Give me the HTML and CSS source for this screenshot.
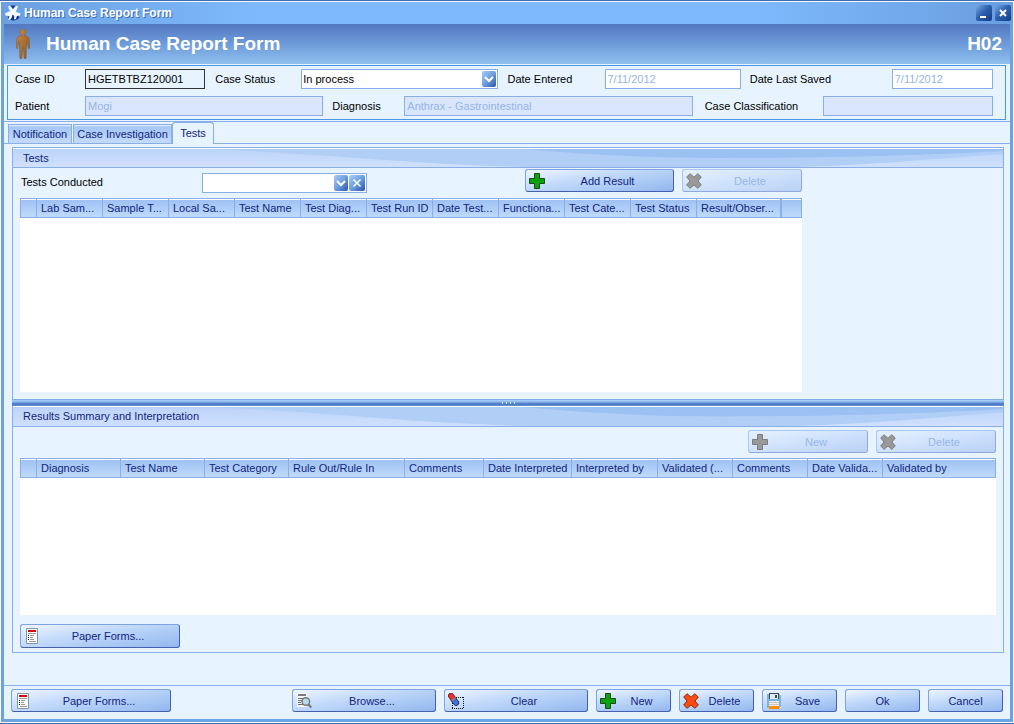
FILE: index.html
```html
<!DOCTYPE html>
<html lang="en">
<head>
<meta charset="utf-8">
<title>Human Case Report Form</title>
<meta name="viewport" content="width=device-width, initial-scale=1">
<link rel="stylesheet" href="styles.css">
</head>
<body>
<svg class="defs" aria-hidden="true">
  <defs>
    <linearGradient id="arrow-bg" x1="0" y1="0" x2="1" y2="1">
      <stop offset="0" stop-color="#a9cdf8"/><stop offset=".5" stop-color="#6c9fe0"/><stop offset="1" stop-color="#2c54a6"/>
    </linearGradient>
    <linearGradient id="skin" x1="0" y1="0" x2="1" y2="1">
      <stop offset="0" stop-color="#c98a45"/><stop offset="1" stop-color="#8f5420"/>
    </linearGradient>
    <symbol id="i-plus" viewBox="0 0 16 16">
      <path d="M5.5.5h5v5h5v5h-5v5h-5v-5h-5v-5h5z" fill="currentColor" stroke="var(--edge)"/>
    </symbol>
    <symbol id="i-cross" viewBox="0 0 16 16">
      <path d="M4 .7 8 4.200 11.800.7 15.300 4 12 8l3.300 4-3.500 3.300L8 12l-4 3.300L.7 12 4 8 .7 4z" fill="currentColor" stroke="var(--edge)" stroke-linejoin="round"/>
    </symbol>
    <symbol id="i-paper" viewBox="0 0 16 16">
      <path d="M2.500.5h11v15h-11z" fill="#fff" stroke="#7f98a8"/>
      <path d="M4 2h8v2H4z" fill="#d20a0a"/>
      <path d="M4 5.500h8M6 7.500h4M6 9.500h3M6 11.500h4M5 13.500h7" stroke="#9a9a9a"/>
      <path d="M4 7h1v1H4zM4 9h1v1H4zM4 11h1v1H4z" fill="#111"/>
    </symbol>
    <symbol id="i-browse" viewBox="0 0 16 16">
      <path d="M1 0h10v14H1z" fill="#f4f7fb"/>
      <path d="M2 2h8" stroke="#7d7d7d" stroke-width="2"/>
      <path d="M2 5.500h7M2 7.500h4M2 9.500h3M2 11.500h5" stroke="#6f6f6f"/>
      <path d="m12.500 11.500 2.800 3" stroke="#777" stroke-width="2.200"/>
      <circle cx="9.800" cy="8.500" r="3.800" fill="#b9d9ef" stroke="#777" stroke-width="1.400"/>
    </symbol>
    <symbol id="i-clear" viewBox="0 0 16 16">
      <path d="M4 4.500h12M4 15.500h12M4.500 4v12M15.500 4v12" fill="none" stroke="#111" stroke-dasharray="1 1" shape-rendering="crispEdges"/>
      <path d="m3 2.800 2.800 3.700" stroke="#5a2020" stroke-width="6" stroke-linecap="round"/>
      <path d="m5.500 6.500 2.700 3.200" stroke="#2b3547" stroke-width="6" stroke-linecap="round"/>
      <path d="m3.100 2.900 2.200 2.900" stroke="#ee2f2f" stroke-width="4.600" stroke-linecap="round"/>
      <path d="m6.600 8 1.500 1.600" stroke="#3b72e0" stroke-width="4.600" stroke-linecap="round"/>
      <path d="m3.500 8 4.200-3.600" stroke="#8d8d8d" stroke-width="1.200"/>
    </symbol>
    <symbol id="i-save" viewBox="0 0 16 16">
      <path d="M1 1h14v14H1z" fill="#79b4dc"/>
      <path d="M3 0h10v6H3z" fill="#2f4b5c"/><path d="M4 1h8v5H4z" fill="#e6e9ea"/><path d="M9 2h2v3H9z" fill="#33505f"/>
      <path d="M3 8h10v5H3z" fill="#f0eeea"/><path d="M3 9.500h10M3 11.500h10" stroke="#c8c5c0"/>
      <path d="M3 13h10v3H3z" fill="#ff8a00"/><path d="M14 1h1v1h-1zM14 14h1v1h-1z" fill="#fff"/>
    </symbol>
    <symbol id="i-arrow" viewBox="0 0 14 16">
      <rect width="14" height="16" rx="2" fill="url(#arrow-bg)"/>
      <path d="m3 6 4 4 4-4" fill="none" stroke="#fff" stroke-width="2"/>
    </symbol>
    <symbol id="i-clearbox" viewBox="0 0 16 16">
      <rect width="16" height="16" rx="2" fill="url(#arrow-bg)"/>
      <path d="m4.500 4.500 7 7m0-7-7 7" fill="none" stroke="#fff" stroke-width="1.600"/>
    </symbol>
    <symbol id="swoosh" viewBox="0 0 990 18" preserveAspectRatio="none">
      <path d="M190 0C310 4 400 16 520 18H780C860 16 930 9 990 5V0z" fill="#b0cef6"/>
      <path d="M510 0C580 6 640 9 710 9 820 9 920 6 990 2V0z" fill="#9bc0f2"/>
    </symbol>
  </defs>
</svg>

<div class="window">
  <header class="titlebar">
    <svg class="app-icon" viewBox="0 0 16 16" aria-hidden="true">
      <circle cx="8.500" cy="8.500" r="7" fill="#6aa8f4"/>
      <path d="M2.500 12a7 7 0 0 0 12 0L9 9z" fill="#0b2f96"/>
      <path d="M5.500.5h5L8 4z" fill="#123a9c"/>
      <path d="m3.500.8 1.800.2L8 4.800l3-4 2 .7-2.200 5 1.700 1.300 3 .7-.5 2-3 .3-1 3.200-2 .5.3-3.500L7.500 9.500 7 12l-1.500 2.500-2.200.2L4.500 11 .5 10.500 0 8.500l4-2 2 .2-2.300-3.200z" fill="#fff"/>
    </svg>
    <span class="window-title">Human Case Report Form</span>
    <button class="caption" type="button" aria-label="Minimize"><svg viewBox="0 0 16 16"><path d="M4 11h6v2H4z" fill="#fff"/></svg></button>
    <button class="caption" type="button" aria-label="Close"><svg viewBox="0 0 16 16"><path d="m5 5 6 6m0-6-6 6" stroke="#fff" stroke-width="2"/></svg></button>
  </header>

  <div class="banner">
    <svg class="person" viewBox="0 0 14 30" aria-hidden="true">
      <path d="M7 0a3 3 0 0 1 1.500 5.700V7h2.800L13 9l1 10-1.500.5L11 12l-.5 3-.3 14.500H8L7.300 18h-.6L6 29.500H3.800L3.500 15 3 12l-1.500 7.500L0 19 1 9l1.700-2h2.800V5.700A3 3 0 0 1 7 0z" fill="url(#skin)" stroke="#7d5a3c" stroke-width=".5"/>
    </svg>
    <h1>Human Case Report Form</h1>
    <span class="form-code">H02</span>
  </div>

  <form class="case">
    <div class="case-row">
      <label class="first" for="case-id">Case ID</label>
      <input class="w-id framed" id="case-id" value="HGETBTBZ120001" readonly>
      <label class="l-status" for="status">Case Status</label>
      <div class="select w-status">
        <select id="status"><option>In process</option></select>
        <svg class="drop" aria-hidden="true"><use href="#i-arrow"/></svg>
      </div>
      <label class="l-entered" for="entered">Date Entered</label>
      <input class="w-entered" id="entered" value="7/11/2012" disabled>
      <label class="l-saved" for="saved">Date Last Saved</label>
      <input class="w-saved" id="saved" value="7/11/2012" disabled>
    </div>
    <div class="case-row">
      <label class="first" for="patient">Patient</label>
      <input class="w-patient tinted" id="patient" value="Mogi" disabled>
      <label class="l-diagnosis" for="diagnosis">Diagnosis</label>
      <input class="w-diagnosis tinted" id="diagnosis" value="Anthrax - Gastrointestinal" disabled>
      <label class="l-class" for="classification">Case Classification</label>
      <input class="w-class tinted" id="classification" value="" disabled>
    </div>
  </form>

  <div class="tabs" role="tablist">
    <button class="tab t-notification" type="button" role="tab">Notification</button>
    <button class="tab t-investigation" type="button" role="tab">Case Investigation</button>
    <button class="tab t-tests active" type="button" role="tab" aria-selected="true">Tests</button>
  </div>

  <main class="content">
    <section class="panel tests">
      <h2><svg class="swoosh" aria-hidden="true"><use href="#swoosh"/></svg><span>Tests</span></h2>
      <div class="panel-body">
        <div class="toolbar">
          <label class="conducted" for="conducted">Tests Conducted</label>
          <div class="select w-conducted">
            <select id="conducted"><option></option></select>
            <svg class="drop" aria-hidden="true"><use href="#i-arrow"/></svg>
            <button class="reset" type="button" aria-label="Clear selection"><svg aria-hidden="true"><use href="#i-clearbox"/></svg></button>
          </div>
          <div class="actions">
            <button class="btn b-add" type="button"><svg class="green"><use href="#i-plus"/></svg><span>Add Result</span></button>
            <button class="btn b-mid" type="button" disabled><svg class="gray"><use href="#i-cross"/></svg><span>Delete</span></button>
          </div>
        </div>
        <div class="grid grid-tests">
          <table>
            <colgroup><col class="c16"><col span="10" class="c66"><col class="c84"><col class="c22"></colgroup>
            <thead><tr><th></th><th>Lab Sam...</th><th>Sample T...</th><th>Local Sa...</th><th>Test Name</th><th>Test Diag...</th><th>Test Run ID</th><th>Date Test...</th><th>Functiona...</th><th>Test Cate...</th><th>Test Status</th><th>Result/Obser...</th><th class="fixed"></th></tr></thead>
          </table>
        </div>
      </div>
    </section>

    <div class="splitter"><i></i><i></i><i></i><i></i></div>

    <section class="panel results">
      <h2><svg class="swoosh" aria-hidden="true"><use href="#swoosh"/></svg><span>Results Summary and Interpretation</span></h2>
      <div class="panel-body">
        <div class="toolbar low">
          <div class="actions">
            <button class="btn b-mid" type="button" disabled><svg class="gray"><use href="#i-plus"/></svg><span>New</span></button>
            <button class="btn b-mid" type="button" disabled><svg class="gray"><use href="#i-cross"/></svg><span>Delete</span></button>
          </div>
        </div>
        <div class="grid grid-results">
          <table>
            <colgroup><col class="c16"><col span="3" class="c84"><col class="c116"><col class="c79"><col class="c88"><col class="c86"><col span="3" class="c75"><col class="c114"></colgroup>
            <thead><tr><th></th><th>Diagnosis</th><th>Test Name</th><th>Test Category</th><th>Rule Out/Rule In</th><th>Comments</th><th>Date Interpreted</th><th>Interpreted by</th><th>Validated (...</th><th>Comments</th><th>Date Valida...</th><th>Validated by</th></tr></thead>
          </table>
        </div>
        <button class="btn b-paper tall" type="button"><svg><use href="#i-paper"/></svg><span>Paper Forms...</span></button>
      </div>
    </section>
  </main>

  <footer class="footer">
    <button class="btn b-paper" type="button"><svg><use href="#i-paper"/></svg><span>Paper Forms...</span></button>
    <div class="actions">
      <button class="btn b-wide" type="button"><svg><use href="#i-browse"/></svg><span>Browse...</span></button>
      <button class="btn b-wide" type="button"><svg><use href="#i-clear"/></svg><span>Clear</span></button>
      <button class="btn b-small" type="button"><svg class="green"><use href="#i-plus"/></svg><span>New</span></button>
      <button class="btn b-small" type="button"><svg class="red"><use href="#i-cross"/></svg><span>Delete</span></button>
      <button class="btn b-small" type="button"><svg><use href="#i-save"/></svg><span>Save</span></button>
      <button class="btn b-small" type="button"><span>Ok</span></button>
      <button class="btn b-small" type="button"><span>Cancel</span></button>
    </div>
  </footer>
</div>
</body>
</html>
```

FILE: styles.css
```css
:root {
  --line: #89aee8;
  --ink: #10257f;
  --pale: #e7f3fe;
}
* { box-sizing: border-box; }
body {
  margin: 0;
  background: #fff;
  color: #000;
  font: 11px/14px "Liberation Sans", Arial, sans-serif;
}
button, input, select { font: inherit; color: inherit; margin: 0; }
svg { display: block; flex: none; }
.defs { position: absolute; width: 0; height: 0; }

.window {
  display: flex;
  flex-direction: column;
  min-height: 100vh;
  padding: 1px;
  border-top: 1px solid #4668b4;
  border-bottom: 1px solid #4668b4;
}
.titlebar {
  display: flex;
  align-items: center;
  gap: 3px;
  height: 22px;
  padding: 0 2px 0 4px;
  background: linear-gradient(90deg, #6ba0e0, #7db9fc 25%, #7db9fc 75%, #699ee0);
}
.app-icon { width: 16px; height: 16px; }
.window-title {
  flex: 1;
  color: #fff;
  font-size: 12px;
  font-weight: bold;
  text-shadow: 1px 1px 0 #3d6cb4;
}
.caption {
  width: 16px;
  height: 16px;
  padding: 0;
  border: 0;
  border-radius: 2px;
  background: linear-gradient(135deg, #7fa9e2, #2d62b0 45%, #123c86);
}
.caption svg { width: 16px; height: 16px; }

.banner, .case, .tabs, .content, .footer {
  border-left: 3px solid #6ba3e2;
  border-right: 3px solid #6ba3e2;
}
.banner {
  display: flex;
  align-items: center;
  height: 40px;
  padding: 0 8px 0 12px;
  background: linear-gradient(#5379c1, #6d9bd9 50%, #90c0f0);
  color: #fff;
}
.person { width: 14px; height: 30px; }
h1, .form-code { margin: 0; font-size: 19px; line-height: 24px; font-weight: bold; }
h1 { flex: 1; padding-left: 16px; }

.case { padding: 1px 4px 1px 3px; background: var(--pale); }
.case-row {
  display: flex;
  align-items: center;
  padding: 3px 12px 4px 7px;
  border: 1px solid #4a97e6;
  border-bottom: 0;
}
.case-row + .case-row { padding: 3px 12px 3px 7px; border-top: 0; border-bottom: 1px solid #4a97e6; }
.first { flex: none; width: 70px; }
.l-status { flex: none; width: 96px; padding-left: 10px; }
.l-entered { flex: none; width: 107px; padding-left: 10px; }
.l-saved { flex: none; width: 151px; padding-left: 9px; }
.l-diagnosis { flex: none; width: 81px; padding-left: 9px; }
.l-class { flex: none; width: 130px; padding-left: 12px; }
.w-id { flex: 1 1 120px; }
.w-status { flex: 1 1 196px; }
.w-entered { flex: 1 1 136px; }
.w-saved { flex: 1 1 101px; }
.w-patient { flex: 1 1 238px; }
.w-diagnosis { flex: 1 1 288px; }
.w-class { flex: 1 1 170px; }
input {
  min-width: 0;
  height: 20px;
  padding: 0 2px;
  border: 1px solid var(--line);
  border-radius: 0;
  background: #fff;
}
input:disabled { color: #95b5e6; }
input.tinted { background: #dae6fe; }
input.framed { border-color: #333; background: var(--pale); }

.select {
  position: relative;
  display: flex;
  align-items: center;
  height: 20px;
  min-width: 0;
  padding-right: 1px;
  border: 1px solid var(--line);
  background: #fff;
}
.select select {
  appearance: none;
  flex: 1;
  min-width: 0;
  height: 18px;
  padding: 0 1px;
  border: 0;
  background: transparent;
}
.drop { width: 14px; height: 16px; pointer-events: none; }
.reset { width: 16px; height: 16px; margin-left: 1px; padding: 0; border: 0; background: none; }
.reset svg { width: 16px; height: 16px; }

.tabs {
  display: flex;
  align-items: flex-end;
  height: 23px;
  padding: 0 4px;
  background: var(--pale);
  box-shadow: inset 0 1px 0 var(--line), inset 0 -1px 0 var(--line);
}
.tab {
  height: 20px;
  padding: 0;
  border: 1px solid var(--line);
  background: linear-gradient(#e9f2fe, #a5c7f5 2px, #c3dbfb);
  color: var(--ink);
  white-space: nowrap;
}
.tab.active {
  height: 22px;
  padding-bottom: 2px;
  border-bottom: 0;
  border-radius: 3px 3px 0 0;
  background: var(--pale);
}
.t-notification { width: 64px; margin-right: 1px; }
.t-investigation { width: 99px; }
.t-tests { width: 42px; }

.content {
  display: flex;
  flex: 1;
  flex-direction: column;
  padding: 3px 6px 32px 8px;
  background: var(--pale);
}
.panel {
  display: flex;
  flex-direction: column;
  border: 1px solid var(--line);
}
.tests { flex: 1 1 252px; border-bottom: 0; }
.results { flex: 1 1 247px; border-top: 0; }
h2 {
  position: relative;
  height: 20px;
  margin: 0;
  padding: 2px 10px 0;
  border-top: 1px solid #fff;
  border-bottom: 1px solid var(--line);
  background: linear-gradient(#bcd4fa, #d0e0fc);
  color: var(--ink);
  font-size: 11px;
  line-height: 14px;
  font-weight: normal;
}
.results h2 { height: 21px; }
h2 span { position: relative; }
.swoosh { position: absolute; inset: 0; width: 100%; height: 100%; }
.panel-body {
  display: flex;
  flex: 1;
  flex-direction: column;
  align-items: flex-start;
  width: 100%;
  padding: 0 7px;
}
.toolbar {
  display: flex;
  width: 100%;
  height: 30px;
  padding: 1px 0 5px;
}
.low { height: 31px; padding-top: 3px; }
.tests .toolbar, .tests .grid { width: 80%; min-width: 782px; }
.conducted { width: 182px; padding: 6px 0 0 1px; }
.w-conducted { flex: none; align-self: flex-end; width: 165px; }
.actions { display: flex; gap: 8px; margin-left: auto; }

.btn {
  display: flex;
  align-items: center;
  height: 23px;
  padding: 0 3px;
  border: 1px solid #7ba4e0;
  border-right-color: #4560ae;
  border-bottom-color: #4560ae;
  border-radius: 3px;
  background: linear-gradient(170deg, #f0f6ff, #c3dafb 40%, #92b7ee);
  color: var(--ink);
}
.btn span { flex: 1; text-align: center; white-space: nowrap; }
.btn svg { width: 16px; height: 16px; }
.btn:disabled {
  border-color: #a9c8f1 #8fa9dc #8fa9dc #a9c8f1;
  background: linear-gradient(170deg, #e6f1fe, #cfe2fc 50%, #b9d1f6);
  color: #98b8e9;
}
.btn.tall { height: 24px; }
.b-paper { width: 160px; }
.b-add { width: 149px; }
.b-mid { width: 120px; }
.b-wide { width: 144px; }
.b-small { width: 75px; }
.green { color: #0aa30e; --edge: #1c4a1c; }
.red { color: #fb4a10; --edge: #8c2a10; }
.gray { color: #999; --edge: #7c7c7c; }

.grid { width: 100%; background: #fff; }
.grid-tests { flex: 1 1 194px; margin-bottom: 7px; }
.grid-results { flex: 1 1 157px; margin-bottom: 9px; }
.results .panel-body { padding-bottom: 4px; }
table { width: 100%; table-layout: fixed; border-collapse: separate; border-spacing: 0; }
th {
  height: 20px;
  padding: 0 0 1px 4px;
  border: solid var(--line);
  border-width: 1px 0 1px 1px;
  background: linear-gradient(#fff 1px, #9fc1f3 1px, #bfdafa);
  color: var(--ink);
  font-weight: normal;
  text-align: left;
  white-space: nowrap;
  overflow: hidden;
}
th:last-child { border-right-width: 1px; }
th.fixed { border-left-width: 2px; }
.c16 { width: 16px; }
.c22 { width: 22px; }
.c66 { width: 66px; }
.c75 { width: 75px; }
.c79 { width: 79px; }
.c84 { width: 84px; }
.c86 { width: 86px; }
.c88 { width: 88px; }
.c114 { width: 114px; }
.c116 { width: 116px; }

.splitter {
  display: flex;
  justify-content: center;
  gap: 3px;
  height: 7px;
  padding-top: 3px;
  background: linear-gradient(#82acea 1px, #a9d0f8 1px, #8ab6ee 3px, #5b8bd2 4px, #4571bd 6px, #8aaee6 7px);
}
.splitter i { width: 1px; height: 2px; background: #cfe5ff; }

.footer {
  display: flex;
  align-items: center;
  padding: 4px 7px 7px;
  border-bottom: 3px solid #6ba3e2;
  background: var(--pale);
  box-shadow: inset 0 1px 0 var(--line);
}
```
